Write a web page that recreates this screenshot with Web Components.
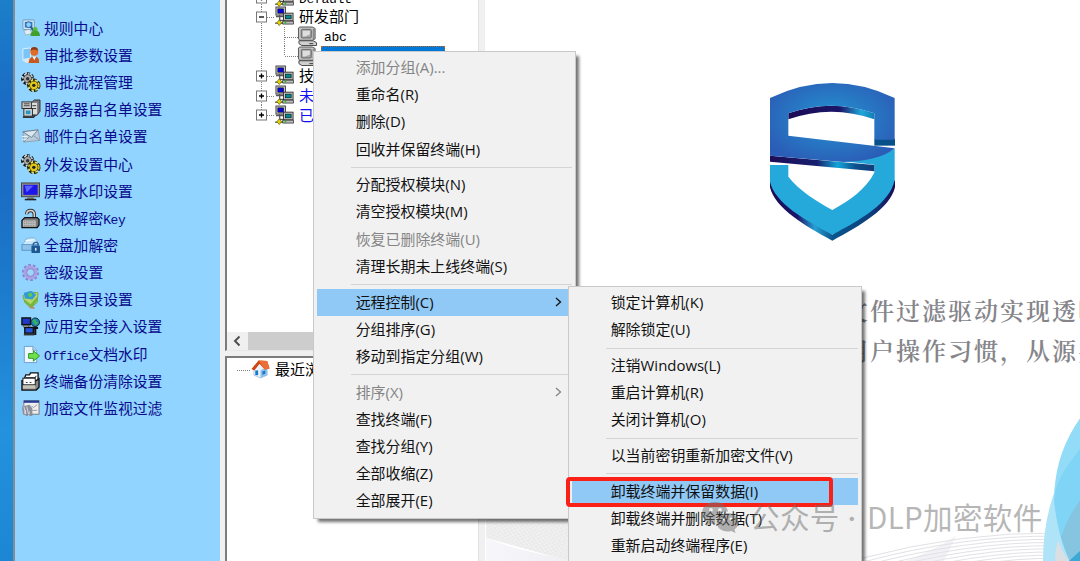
<!DOCTYPE html>
<html lang="zh-CN">
<head>
<meta charset="utf-8">
<title>DLP</title>
<style>
  html, body { margin: 0; height: 100%; overflow: hidden; background: #fff; }
</style>
</head>
<body>
<dlp-window>
  <side-nav slot="nav">
    <side-item icon="rules">规则中心</side-item>
    <side-item icon="person">审批参数设置</side-item>
    <side-item icon="gears">审批流程管理</side-item>
    <side-item icon="server">服务器白名单设置</side-item>
    <side-item icon="mail">邮件白名单设置</side-item>
    <side-item icon="gears">外发设置中心</side-item>
    <side-item icon="screen">屏幕水印设置</side-item>
    <side-item icon="lock">授权解密<span>Key</span></side-item>
    <side-item icon="disk">全盘加解密</side-item>
    <side-item icon="cog">密级设置</side-item>
    <side-item icon="map">特殊目录设置</side-item>
    <side-item icon="network">应用安全接入设置</side-item>
    <side-item icon="doc"><span>Office</span>文档水印</side-item>
    <side-item icon="folders">终端备份清除设置</side-item>
    <side-item icon="filter">加密文件监视过滤</side-item>
  </side-nav>

  <tree-panel slot="tree" class="main" scroll>
    <tree-row icon="group" toggle="plus"><span>Default</span></tree-row>
    <tree-row icon="group" toggle="minus">研发部门</tree-row>
    <tree-row icon="pc" child><span>abc</span></tree-row>
    <tree-row icon="pc" child="last" selected><span>2222</span></tree-row>
    <tree-row icon="group" toggle="plus">技术部门</tree-row>
    <tree-row icon="group" toggle="plus" link>未分组</tree-row>
    <tree-row icon="group" toggle="plus" last link>已删除</tree-row>
  </tree-panel>
  <tree-panel slot="tree" class="recent">
    <tree-row icon="home" flat>最近浏览</tree-row>
  </tree-panel>

  <brand-page slot="page">
    <p>文件过滤驱动实现透明</p>
    <p>用户操作习惯，从源头</p>
  </brand-page>

  <context-menu slot="overlay" style="left:313px;top:51px;width:261px;height:466px">
    <menu-item disabled>添加分组(A)...</menu-item>
    <menu-item>重命名(R)</menu-item>
    <menu-item>删除(D)</menu-item>
    <menu-item>回收并保留终端(H)</menu-item>
    <menu-line></menu-line>
    <menu-item>分配授权模块(N)</menu-item>
    <menu-item>清空授权模块(M)</menu-item>
    <menu-item disabled>恢复已删除终端(U)</menu-item>
    <menu-item>清理长期未上线终端(S)</menu-item>
    <menu-line></menu-line>
    <menu-item active submenu>远程控制(C)</menu-item>
    <menu-item>分组排序(G)</menu-item>
    <menu-item>移动到指定分组(W)</menu-item>
    <menu-line></menu-line>
    <menu-item disabled submenu>排序(X)</menu-item>
    <menu-item>查找终端(F)</menu-item>
    <menu-item>查找分组(Y)</menu-item>
    <menu-item>全部收缩(Z)</menu-item>
    <menu-item>全部展开(E)</menu-item>
  </context-menu>

  <context-menu slot="overlay" style="left:568px;top:286px;width:292px;height:290px">
    <menu-item>锁定计算机(K)</menu-item>
    <menu-item>解除锁定(U)</menu-item>
    <menu-line></menu-line>
    <menu-item>注销Windows(L)</menu-item>
    <menu-item>重启计算机(R)</menu-item>
    <menu-item>关闭计算机(O)</menu-item>
    <menu-line></menu-line>
    <menu-item>以当前密钥重新加密文件(V)</menu-item>
    <menu-line></menu-line>
    <menu-item active>卸载终端并保留数据(I)</menu-item>
    <menu-item>卸载终端并删除数据(T)</menu-item>
    <menu-item>重新启动终端程序(E)</menu-item>
  </context-menu>

  <focus-frame slot="overlay"></focus-frame>
  <water-mark slot="overlay">公众号 <span>·</span> DLP加密软件</water-mark>
</dlp-window>

<script>
const ICONS = {
  rules: `<rect x="2" y="1" width="12" height="10" rx="1" fill="#d8e8f2" stroke="#6d9cbe"/><rect x="4" y="3" width="8" height="6" fill="#2b7fd0"/><circle cx="8" cy="6" r="3" fill="#8fd0ff" stroke="#1c5fa8"/><path d="M10 8l4 5" stroke="#2a5a8c" stroke-width="2"/><path d="M3 12l6-1 3 4-7 2z" fill="#e6edf2" stroke="#8aa3b5" stroke-width=".7"/><circle cx="15" cy="11" r="2.500" fill="#5dbb3d"/><path d="M10 18q0-6 5-6t5 6z" fill="#3fa02b"/>`,
  person: `<path d="M2 3l8-1v11l-8 1z" fill="#7cc4f3" stroke="#d9f0ff"/><path d="M1 15l8-2 4 3-7 2z" fill="#dfe8ee"/><circle cx="14" cy="6" r="4.200" fill="#e06a28"/><path d="M10 5q0-4 4-4t4 4l-2-1h-4z" fill="#8a3b13"/><path d="M8 18q0-7 6-7t5 7z" fill="#c9581f"/><path d="M12 11h4l-2 4z" fill="#fff"/>`,
  gears: `<circle cx="7" cy="6" r="4.600" fill="none" stroke="#111" stroke-width="4.600" stroke-dasharray="2.600 1.500"/><circle cx="7" cy="6" r="4.400" fill="#aaa" stroke="#222"/><circle cx="7" cy="6" r="5.200" fill="none" stroke="#d5d5d5" stroke-width="1.600" stroke-dasharray="2 2"/><circle cx="7" cy="6" r="1.800" fill="#333"/><circle cx="13.500" cy="13" r="4.800" fill="none" stroke="#221f00" stroke-width="4.600" stroke-dasharray="2.900 1.400"/><circle cx="13.500" cy="13" r="4.600" fill="#e1c91d" stroke="#3a3300"/><circle cx="13.500" cy="13" r="5.400" fill="none" stroke="#f0dc3a" stroke-width="1.500" stroke-dasharray="2.300 2"/><circle cx="13.500" cy="13" r="1.800" fill="#222"/>`,
  server: `<rect x="1" y="2" width="10" height="7" fill="#c9c9c9" stroke="#333"/><path d="M3 4h6M3 6h6" stroke="#444"/><path d="M11 3l3-3h6v12l-3 4h-6z" fill="#777" stroke="#333"/><rect x="11.500" y="3" width="5.500" height="12" fill="#ddd"/><path d="M12 6h4M12 9h4" stroke="#333"/><rect x="3" y="9" width="9" height="8" fill="#d9d9d9" stroke="#222"/><rect x="5" y="11" width="5" height="4" fill="#2a95bd"/><path d="M2 18h11l2-2" stroke="#333" stroke-width="2" fill="none"/>`,
  mail: `<path d="M2 5l16-2 2 11-17 2z" fill="#b9cbd9" stroke="#8ca1b2"/><path d="M2 5l9 6 7-8z" fill="#dbe7ef" stroke="#667f94"/><path d="M3 16l6-6M20 14l-7-5" stroke="#8198aa"/><path d="M1 10h6M1 13h5" stroke="#e9f3fa"/>`,
  screen: `<rect x=".5" y="1" width="19" height="14.500" fill="#8a8a8a" stroke="#444"/><rect x="2.500" y="3" width="15" height="10.500" fill="#1c16e8"/><path d="M4 4h9l-7 7z" fill="#5b63ff"/><path d="M7 16h6l1 2H6z" fill="#777"/><path d="M4 18.500h12" stroke="#222" stroke-width="1.600"/>`,
  lock: `<path d="M6 5.500q0-4 4-4t4 4V10" fill="none" stroke="#333" stroke-width="3.600"/><path d="M6 5.500q0-4 4-4t4 4V10" fill="none" stroke="#d5d5d5" stroke-width="1.600"/><path d="M1 12l3-3h13l2 2v6l-2 2.500H1z" fill="#777" stroke="#111" stroke-width="1.300"/><path d="M2 12h13.500v6.500H2z" fill="#c2c2c2"/><path d="M3 13.500h12M3 15.500h12M3 17.500h12" stroke="#777" stroke-dasharray="1 1"/>`,
  disk: `<path d="M3 7q2-5 5-5h6q3 1 4 6v7H1v-6z" fill="#cae8fb" stroke="#7db1d8"/><path d="M1 9h17v6H1z" fill="#8fc3ea" stroke="#5f9bca"/><path d="M5 5l8-1" stroke="#fff"/><rect x="11" y="10" width="9" height="8" rx="1" fill="#1b5792"/><path d="M13 10V8q3-3 5 0v2" fill="none" stroke="#2d6299" stroke-width="1.500"/><path d="M15.500 12.500v3" stroke="#d7ecff" stroke-width="1.600"/>`,
  cog: `<circle cx="10" cy="10" r="7.200" fill="none" stroke="#8b7fcf" stroke-width="3.600" stroke-dasharray="2.600 1.900"/><circle cx="10" cy="10" r="5.600" fill="none" stroke="#aaa1e4" stroke-width="3.600"/><circle cx="10" cy="10" r="4" fill="#9ed6fb" stroke="#7e76bb" stroke-width=".8"/>`,
  map: `<path d="M2 6l6-4 10 1-1 10-7 6-6-6z" fill="#b7d76a" stroke="#7aa43e"/><path d="M3 3l8-2 5 4-4 5-8-1z" fill="#2f9bd9"/><path d="M7 4l4-1 1 3-3 2z" fill="#62c84c"/><path d="M4 10l6 5 7-8v4l-6 8-7-6z" fill="#72b640"/><path d="M9 18l5 1" stroke="#b58b68" stroke-width="2"/>`,
  network: `<rect x="1" y="1" width="9" height="7" fill="#2039c9" stroke="#111" stroke-width="1.500"/><path d="M2 9h7l-2 2H3z" fill="#ccc" stroke="#222" stroke-width=".6"/><rect x="4" y="11" width="9" height="6" fill="#2752db" stroke="#111" stroke-width="1.500"/><path d="M3 18.500h11" stroke="#333" stroke-width="1.800"/><circle cx="15" cy="5.500" r="4.500" fill="#1d84b5" stroke="#123"/><path d="M12 4l3-2 1 3 2 1-3 3-1-3z" fill="#35b84c"/><path d="M15 10v9M13 11.500h5" stroke="#111" stroke-width="2.200" fill="none"/>`,
  doc: `<path d="M3.500 1.500h9l4 4v13h-13z" fill="#eef7ff" stroke="#6fa0d0"/><path d="M12.500 1.500v4h4" fill="#b9d8f2" stroke="#6fa0d0"/><path d="M8 9h5V6l6.500 5.500L13 17v-3H8z" fill="#6ee04a" stroke="#2d9424"/>`,
  folders: `<path d="M3 9l2-6h4l1-2h8v12H3z" fill="#fff" stroke="#111" stroke-width="1.400"/><path d="M5 6h10l1-2" fill="none" stroke="#111"/><path d="M1 9h15l3-2v9l-3 3H1z" fill="#888" stroke="#111" stroke-width="1.400"/><rect x="2" y="6.500" width="13" height="7" fill="#fff" stroke="#111"/><path d="M2 14h13v3.500H2z" fill="#c4c4b8"/><path d="M5 11h2M9 11h2" stroke="#333"/>`,
  filter: `<rect x="3" y="2" width="16" height="14" fill="#eee" stroke="#777"/><rect x="3" y="1.500" width="16" height="2.500" fill="#263c93"/><path d="M11 7l2 2 4-3M12 12h5" stroke="#999" fill="none"/><path d="M1 8l8-2 3 4v8H9v-6l-2 6H5V11l-3 5z" fill="#8d8f9c"/><path d="M3 8l2 8M6 8l2 8" stroke="#d7dbe5"/>`,
  group: `<path d="M5 8v9M5 14h6" stroke="#222"/><rect x="1" y="0" width="10" height="8.500" fill="#c8c8c8" stroke="#444"/><rect x="3" y="2" width="6" height="4.500" fill="#0505df" stroke="#000" stroke-width=".6"/><path d="M1 10h10" stroke="#555" stroke-width="1.600"/><rect x="9" y="6.500" width="10" height="8" fill="#ccc" stroke="#333"/><rect x="11" y="8.500" width="6" height="4" fill="#008a8a" stroke="#000" stroke-width=".6"/><path d="M8 15h11.500v3H8z" fill="#bbb" stroke="#333" stroke-width=".8"/><circle cx="11" cy="16.500" r=".9" fill="#0c0"/><path d="M0 17h8" stroke="#222"/><path d="M4.500 13.500l2.500 3-2.500 3-2.500-3z" fill="#e5d600" stroke="#554e00" stroke-width=".7"/>`,
  pc: `<path d="M2 0h13l3 1.500v11L15 14H2L.5 12.500V1z" fill="#c2c2c2" stroke="#555"/><path d="M15.500 2v11l2-1V2z" fill="#888"/><rect x="3.500" y="2.500" width="10.500" height="9" rx="1" fill="#a5a5a5" stroke="#666"/><path d="M5 4h7.500v4l-5 2H5z" fill="#dedede"/><path d="M1 14.500h15l3.500 2v3H4l-3-2z" fill="#cfcfcf" stroke="#444"/><path d="M12 17.500h4" stroke="#333"/>`,
  home: `<path d="M3 9l7-6 7 6v7l-7 3-7-3z" fill="#eaf3fa" stroke="#90aabe" stroke-width=".6"/><path d="M10 11l7-4v9l-7 3z" fill="#8fc0e8"/><path d="M.5 9.500L8 .5l9 .5 2.500 8-5 1L9 4 3.500 11z" fill="#cf4413"/><path d="M8 .5L17 1l2.500 8-5 1z" fill="#ec6f38"/><rect x="4.500" y="11" width="3" height="5" fill="#1779c9"/><path d="M12 12l3-1v3.500l-3 1z" fill="#1779c9"/>`
};

// Small helper: shadow root from a markup string
function shadow(el, html) {
  const template = document.createElement('template');
  template.innerHTML = html;
  el.attachShadow({ mode: 'open' });
  el.shadowRoot.appendChild(template.content.cloneNode(true));
}

class UiIcon extends HTMLElement {
  static get observedAttributes() {
    return ['name'];
  }
  constructor() {
    super();
    this.attachShadow({ mode: 'open' });
  }
  attributeChangedCallback() {
    this.shadowRoot.innerHTML = `
      <style>
        :host { display: block; flex: none; width: 20px; height: 20px; }
        svg { display: block; width: 100%; height: 100%; overflow: visible; }
      </style>
      <svg viewBox="0 0 20 20">${ICONS[this.getAttribute('name')] || ''}</svg>`;
  }
}
customElements.define('ui-icon', UiIcon);

customElements.define('dlp-window', class extends HTMLElement {
  constructor() {
    super();
    shadow(this, `
      <style>
        :host {
          display: flex;
          position: relative;
          width: 1080px;
          height: 561px;
          overflow: hidden;
          background: #fff;
          font-family: "Open Sans", "Noto Sans CJK SC", sans-serif;
        }
        .desktop {
          flex: none;
          width: 13px;
          background: linear-gradient(#1c7fc9 0, #1a6cc4 100px, #1a6cc4 180px, #1c78ca 270px, #2492dd 430px, #1c86d3 100%);
        }
        .edge { flex: none; width: 2px; background: #858b91; }
        .trees { flex: none; display: flex; flex-direction: column; width: 259px; background: #f0f0f0; }
        .page { flex: 1; display: flex; min-width: 0; }
      </style>
      <div class="desktop"></div>
      <div class="edge"></div>
      <slot name="nav"></slot>
      <div class="trees"><slot name="tree"></slot></div>
      <div class="page"><slot name="page"></slot></div>
      <slot name="overlay"></slot>
    `);
  }
});

customElements.define('side-nav', class extends HTMLElement {
  constructor() {
    super();
    shadow(this, `
      <style>
        :host {
          display: flex;
          flex-direction: column;
          flex: none;
          box-sizing: border-box;
          width: 210px;
          padding: 14.8px 0 0 6px;
          background: #90d4ff;
          border-right: 5px solid #f0f0f0;
        }
      </style>
      <slot></slot>
    `);
  }
});

customElements.define('side-item', class extends HTMLElement {
  constructor() {
    super();
    shadow(this, `
      <style>
        :host {
          display: flex;
          align-items: center;
          gap: 3px;
          height: 27.15px;
          color: #0a0a8c;
          font: 14.8px/20px "Noto Sans CJK SC", sans-serif;
          white-space: nowrap;
        }
        ui-icon { width: 19px; height: 19px; margin-right: 1px; }
        .label { padding-bottom: 1px; }
        ::slotted(span) {
          font-family: "Liberation Mono", monospace;
          font-size: 13px;
          line-height: 1;
          letter-spacing: -0.4px;
        }
      </style>
      <ui-icon></ui-icon>
      <div class="label"><slot></slot></div>
    `);
  }
  connectedCallback() {
    this.shadowRoot.querySelector('ui-icon').setAttribute('name', this.getAttribute('icon'));
  }
});

customElements.define('tree-panel', class extends HTMLElement {
  constructor() {
    super();
    shadow(this, `
      <style>
        :host {
          display: flex;
          flex-direction: column;
          justify-content: space-between;
          box-sizing: border-box;
          width: 254px;
          background: #fff;
          border-left: 2px solid #7c7c7c;
          border-right: 1px solid #e0e0e0;
        }
        :host(.main) { height: 351px; border-bottom: 1px solid #e8e8e8; }
        :host(.recent) { flex: 1; margin-top: 5px; border-top: 2px solid #7c7c7c; }
        .rows { display: flex; flex-direction: column; padding-left: 24px; }
        :host(.main) .rows { margin-top: -12.5px; }
        :host(.recent) .rows { padding-left: 9px; padding-top: 2px; }
        .bar { display: none; height: 18px; background: #f0f0f0; }
        :host([scroll]) .bar { display: flex; }
        .bar svg { width: 21px; height: 18px; }
        .thumb { width: 150px; background: #cdcdcd; }
      </style>
      <div class="rows"><slot></slot></div>
      <div class="bar">
        <svg viewBox="0 0 21 18"><path d="M12.500 4.500L8 9l4.500 4.500" fill="none" stroke="#505050" stroke-width="2"/></svg>
        <div class="thumb"></div>
      </div>
    `);
  }
});

customElements.define('tree-row', class extends HTMLElement {
  constructor() {
    super();
    shadow(this, `
      <style>
        :host {
          display: flex;
          align-items: center;
          height: 19.67px;
          color: #000;
          font: 15px/19px "Noto Sans CJK SC", sans-serif;
          white-space: nowrap;
        }
        :host([link]) { color: #1111f5; }
        .gutter { flex: none; height: 19.67px; }
        ui-icon { width: 19px; height: 19px; }
        .label { margin-left: 5px; padding-bottom: 2px; }
        :host([child]) .label { margin-left: 4px; padding: 0 3px 4px; }
        :host([selected]) .label {
          box-sizing: border-box;
          width: 124px;
          height: 20px;
          line-height: 16px;
          background: #0078d7;
          color: #fff;
          outline: 1px dotted #c06a20;
          outline-offset: -1px;
        }
        ::slotted(span) {
          font-family: "Liberation Mono", monospace;
          font-size: 13px;
          line-height: 1;
          letter-spacing: -0.3px;
        }
      </style>
      <svg class="gutter"></svg>
      <ui-icon></ui-icon>
      <div class="label"><slot></slot></div>
    `);
  }
  connectedCallback() {
    const root = this.shadowRoot;
    root.querySelector('ui-icon').setAttribute('name', this.getAttribute('icon'));
    const gutter = root.querySelector('.gutter');
    const child = this.hasAttribute('child');
    const toggle = this.getAttribute('toggle');
    const dots = 'stroke="#808080" stroke-dasharray="1 1"';
    let art = '';
    if (this.hasAttribute('flat')) {
      gutter.style.width = '15px';
      art = `<path d="M1 10.500h14" ${dots}/>`;
    } else if (child) {
      const end = this.getAttribute('child') === 'last' ? 10 : 20;
      gutter.style.width = '47px';
      art = `<path d="M10.500 0v20M33.500 0v${end}M34 10.500h13" ${dots}/>`;
    } else {
      gutter.style.width = '24px';
      art = `<path d="M10.500 0v${this.hasAttribute('last') ? 10 : 20}M16 10.500h8" ${dots}/>
        <rect x="5.500" y="5" width="10" height="10" fill="#fff" stroke="#777"/>
        <path d="M8 10h5${toggle === 'plus' ? 'M10.500 7.500v5' : ''}" stroke="#000" stroke-width="1.300"/>`;
    }
    gutter.innerHTML = art;
  }
});

customElements.define('brand-page', class extends HTMLElement {
  constructor() {
    super();
    shadow(this, `
      <style>
        :host {
          display: flex;
          flex-direction: column;
          flex: 1;
          position: relative;
          isolation: isolate;
          overflow: hidden;
          border-left: 1px solid #eee;
        }
        .logo { flex: none; width: 170px; height: 180px; margin: 70px 0 40px 264.5px; }
        ::slotted(p) {
          margin: 0 0 0 359px;
          color: #85858a;
          font: 600 24px/40px "Noto Serif CJK SC", "Noto Sans CJK SC", serif;
          letter-spacing: 2px;
          white-space: nowrap;
        }
        .waves { position: absolute; left: 0; top: 0; width: 596px; height: 561px; z-index: -1; }
      </style>
      <svg class="waves" viewBox="484 0 596 561">
        <defs>
          <pattern id="weave" width="5" height="4" patternUnits="userSpaceOnUse" patternTransform="rotate(14)">
            <rect width="5" height="4" fill="#f1f1f1"/><path d="M0 1h3M2.500 3h2.500" stroke="#e4e4e4"/>
          </pattern>
          <linearGradient id="haze" x2="1"><stop stop-color="#f7f7fb"/><stop offset="1" stop-color="#ededf2"/></linearGradient>
        </defs>
        <path d="M485 515h95v50q-50-15-95-27z" fill="url(#weave)"/>
        <path d="M485 538q40 16 95 23H485z" fill="url(#haze)"/>
        <path d="M905 561q30-12 50-25l-12 25z" fill="#f2f2f6"/>
        <g id="lines" fill="none" stroke="#e2e2e6"></g>
        <path d="M1080 417Q1058 449 1053 493Q1042 525 1042 561H1080z" fill="#aee3f8"/>
        <path d="M1080 417Q1056 450 1053.500 490Q1054 530 1069 561H1080z" fill="#93dcf8"/>
        <path d="M1080 448Q1050 483 1053.500 505Q1058 540 1069 561H1080z" fill="#80d4f6"/>
        <path d="M1057 540q-3 10-3 21h14q-7-9-11-21z" fill="#d9dfe2"/>
        <path d="M1080 499q-12 15-20 38 4 14 9 24l11-10z" fill="#85c5df"/>
        <path d="M1080 550l-12 11h12z" fill="#3aa9d8"/>
      </svg>
      <svg class="logo" viewBox="0 0 510 540">
        <defs>
          <radialGradient id="top" cx=".5" cy=".45" r=".6">
            <stop stop-color="#2394d2"/><stop offset="1" stop-color="#2b5db6"/>
          </radialGradient>
          <linearGradient id="shine">
            <stop stop-color="#1c0c55"/><stop offset=".45" stop-color="#17206f"/><stop offset=".65" stop-color="#14a5d8"/>
            <stop offset=".82" stop-color="#0d4f8c"/><stop offset="1" stop-color="#123c78"/>
          </linearGradient>
          <linearGradient id="arc">
            <stop stop-color="#1c0c55"/><stop offset=".6" stop-color="#1a1668"/><stop offset=".85" stop-color="#20a8da"/>
            <stop offset="1" stop-color="#0f7eb4"/>
          </linearGradient>
          <linearGradient id="rim">
            <stop stop-color="#1c0c55"/><stop offset=".22" stop-color="#1a1668"/><stop offset=".36" stop-color="#27a0d4"/>
            <stop offset=".5" stop-color="#0a568d"/><stop offset=".8" stop-color="#0d3f7c"/><stop offset="1" stop-color="#1c0c55"/>
          </linearGradient>
        </defs>
        <path d="M115 130Q244 84 373 130V148Q244 102 115 148z" fill="url(#arc)"/>
        <path d="M373 207H435V227H373z" fill="#08508a"/>
        <path d="M60 335V352C75 415 165 468 247 512C330 468 420 415 435 352V330L247 494z" fill="url(#rim)"/>
        <path d="M434 235V330C420 400 330 450 247 494C165 450 75 400 60 335V285H115V320C150 364 195 390 247 420C300 390 345 360 373 308V284L280 274C360 268 410 255 434 235z" fill="#25a9db"/>
        <path d="M60 257L373 285V304L60 275z" fill="url(#shine)"/>
        <path d="M60 84Q247 -6 434 84V209H373V130Q244 84 115 130V197L434 235C400 265 340 274 280 276L60 257z" fill="url(#top)"/>
      </svg>
      <slot></slot>
    `);
    // Fan of contour lines along the bottom edge
    let d = '';
    for (let i = 0; i < 10; i++) {
      d += `M862 ${558 + i * 4}Q${960 + i * 3} ${532 + i * 3} 1056 ${533 + i * 3.2}`;
    }
    this.shadowRoot.querySelector('#lines').innerHTML = `<path d="${d}"/>`;
  }
});

customElements.define('context-menu', class extends HTMLElement {
  constructor() {
    super();
    shadow(this, `
      <style>
        :host {
          display: flex;
          flex-direction: column;
          position: absolute;
          padding-top: 2.4px;
          border: 1px solid #c9c9c9;
          background: #f1f1f1;
          box-shadow: 4px 4px 3px -1px rgba(0, 0, 0, .55);
          box-sizing: border-box;
        }
      </style>
      <slot></slot>
    `);
  }
  connectedCallback() {
    // declared sizes are the inner box; add the frame
    this.style.width = parseFloat(this.style.width) + 2 + 'px';
    this.style.height = parseFloat(this.style.height) + 2 + 'px';
  }
});

customElements.define('menu-item', class extends HTMLElement {
  constructor() {
    super();
    shadow(this, `
      <style>
        :host {
          display: flex;
          flex: none;
          align-items: center;
          justify-content: space-between;
          height: 27.17px;
          margin: 0 3px;
          padding: 0 9px 0 38.7px;
          color: #111;
          font-size: 14.95px;
          line-height: 20px;
          white-space: nowrap;
        }
        :host([active]) { background: #90c8f6; }
        :host([disabled]) { color: #858585; }
        span { padding-bottom: 1.8px; }
        svg { display: none; width: 8px; height: 12px; }
        :host([submenu]) svg { display: block; }
      </style>
      <span><slot></slot></span>
      <svg viewBox="0 0 8 12"><path d="M1 2l4.500 4L1 10" fill="none" stroke="currentColor" stroke-width="1.300"/></svg>
    `);
  }
});

customElements.define('menu-line', class extends HTMLElement {
  constructor() {
    super();
    shadow(this, `
      <style>
        :host { display: flex; flex: none; align-items: center; height: 8.6px; margin: 0 3px 0 37px; }
        div { flex: 1; height: 1px; background: #d4d4d4; }
      </style>
      <div></div>
    `);
  }
});

customElements.define('focus-frame', class extends HTMLElement {
  constructor() {
    super();
    shadow(this, `
      <style>
        :host {
          display: block;
          position: absolute;
          left: 566px;
          top: 477px;
          width: 267px;
          height: 30px;
          box-sizing: border-box;
          border: 4px solid #fb2016;
          border-radius: 4px;
        }
      </style>
    `);
  }
});

customElements.define('water-mark', class extends HTMLElement {
  constructor() {
    super();
    shadow(this, `
      <style>
        :host {
          display: flex;
          align-items: center;
          gap: 11px;
          position: absolute;
          left: 701px;
          top: 498px;
          height: 40px;
          color: rgba(110, 110, 110, .5);
          font: 400 29.6px/40px "Noto Sans CJK SC", sans-serif;
          letter-spacing: .3px;
          white-space: nowrap;
        }
        svg { width: 38px; height: 34px; }
        div { padding-bottom: 3px; }
        ::slotted(span) {
          margin: 0 4px 0 1px;
          font-family: "Open Sans", sans-serif;
          font-weight: 600;
          line-height: 1;
        }
      </style>
      <svg viewBox="0 0 38 34">
        <path fill="currentColor" fill-rule="evenodd" d="M14 1C6.500 1 1 6 1 12c0 3.500 2 6.500 5 8.500L5 25l5-2.500c1.500.4 3 .5 4.500.5C13 15 20 10 27 10.500 26 5 20.500 1 14 1zM10 7a1.900 1.900 0 1 1 0 3.800A1.900 1.900 0 0 1 10 7zm9 0a1.900 1.900 0 1 1 0 3.800A1.900 1.900 0 0 1 19 7z"/>
        <path fill="currentColor" fill-rule="evenodd" d="M26.500 12C20 12 15.500 16 15.500 21s4.500 9.500 11 9.500c1.300 0 2.600-.2 3.800-.6L34.500 32l-1-3.600c2.500-1.800 4-4.400 4-7.400 0-5-4.500-9-11-9zM23 16.500a1.500 1.500 0 1 1 0 3 1.500 1.500 0 0 1 0-3zm7 0a1.500 1.500 0 1 1 0 3 1.500 1.500 0 0 1 0-3z"/>
      </svg>
      <div><slot></slot></div>
    `);
  }
});
</script>
</body>
</html>
